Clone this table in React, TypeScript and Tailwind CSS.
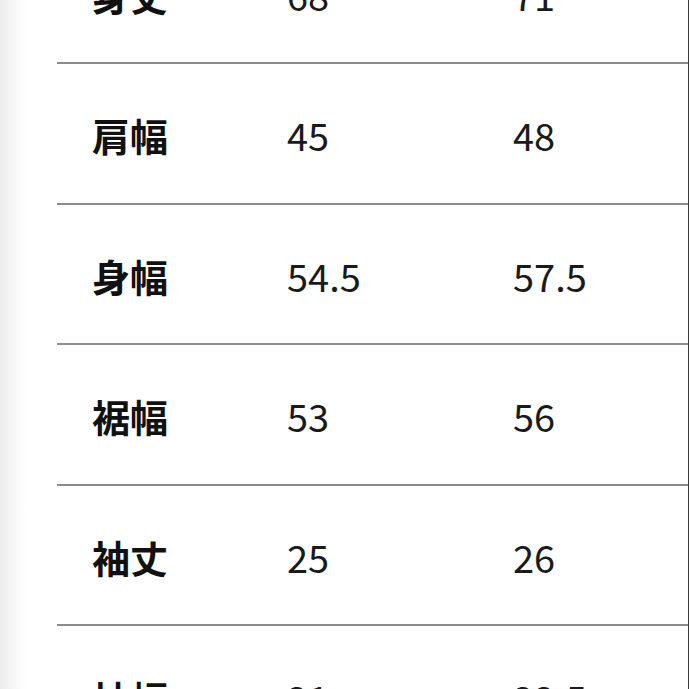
import React from "react";

const rows: [string, string, string][] = [
  ["身丈", "68", "71"],
  ["肩幅", "45", "48"],
  ["身幅", "54.5", "57.5"],
  ["裾幅", "53", "56"],
  ["袖丈", "25", "26"],
  ["袖幅", "21", "22.5"],
];

export default function App() {
  return (
    <div
      className="relative flex h-[689px] w-[689px] overflow-hidden bg-white"
      style={{ fontFamily: '"Noto Sans CJK JP", "Noto Sans", sans-serif' }}
    >
      <div className="h-full w-[26px] shrink-0 bg-gradient-to-r from-[#ececec] to-white" />
      <div className="h-full w-[31px] shrink-0" />
      <div className="flex h-full flex-1 flex-col border-r border-[#3a3a3a]">
        <div className="mt-[-76.6px] flex flex-col">
          {rows.map(([label, a, b]) => (
            <div
              key={label}
              className="flex h-[140.6px] shrink-0 items-center border-b-2 border-[#8c8c8c] pt-[4px] text-[38px] leading-none"
            >
              <div className="w-[230px] pl-[35px] font-bold text-[#111]">{label}</div>
              <div className="w-[226px] text-[#1a1a1a]">{a}</div>
              <div className="flex-1 text-[#1a1a1a]">{b}</div>
            </div>
          ))}
        </div>
      </div>
    </div>
  );
}
